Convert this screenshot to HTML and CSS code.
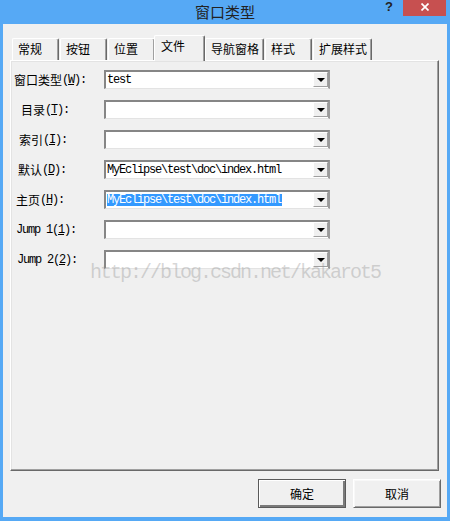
FILE: index.html
```html
<!DOCTYPE html>
<html>
<head>
<meta charset="utf-8">
<link rel="stylesheet" href="styles.css">
</head>
<body>
<div class="window">
  <div class="titlebar">
    <div class="spacer"></div>
    <div class="title">窗口类型</div>
    <div class="controls">
      <span class="help">?</span>
      <span class="close"><svg width="8" height="8" viewBox="0 0 8 8"><path d="M0.5 0.5L7.5 7.5M7.5 0.5L0.5 7.5" stroke="#fff" stroke-width="1.7"/></svg></span>
    </div>
  </div>
  <div class="client">
    <div class="tabs">
      <div class="tab">常规</div>
      <div class="tab">按钮</div>
      <div class="tab">位置</div>
      <div class="tab sel">文件</div>
      <div class="tab">导航窗格</div>
      <div class="tab">样式</div>
      <div class="tab">扩展样式</div>
    </div>
    <div class="panel">
      <div class="form">
        <div class="label i3">窗口类型<span class="a">(<u>W</u>):</span></div>
        <div class="combo"><span class="val a">test</span><span class="drop"><i class="tri"></i></span></div>

        <div class="label i10">目录<span class="a">(<u>T</u>):</span></div>
        <div class="combo"><span class="val a"></span><span class="drop"><i class="tri"></i></span></div>

        <div class="label i8">索引<span class="a">(<u>I</u>):</span></div>
        <div class="combo"><span class="val a"></span><span class="drop"><i class="tri"></i></span></div>

        <div class="label i7">默认<span class="a">(<u>D</u>):</span></div>
        <div class="combo"><span class="val a">MyEclipse\test\doc\index.html</span><span class="drop"><i class="tri"></i></span></div>

        <div class="label i5">主页<span class="a">(<u>H</u>):</span></div>
        <div class="combo"><span class="val a"><span class="hl">MyEclipse\test\doc\index.html</span></span><span class="drop"><i class="tri"></i></span></div>

        <div class="label i5"><span class="a">Jump 1(<u>1</u>):</span></div>
        <div class="combo"><span class="val a"></span><span class="drop"><i class="tri"></i></span></div>

        <div class="label i6"><span class="a">Jump 2(<u>2</u>):</span></div>
        <div class="combo"><span class="val a"></span><span class="drop"><i class="tri"></i></span></div>
      </div>
      <div class="watermark">http://blog.csdn.net/kakarot5</div>
    </div>
    <div class="buttons">
      <button class="btn def">确定</button>
      <button class="btn">取消</button>
    </div>
  </div>
</div>
</body>
</html>
```
FILE: styles.css
```css
html, body {
  margin: 0;
  padding: 0;
}
body {
  width: 450px;
  height: 521px;
  background: #56a9f5;
  font-family: "Noto Sans CJK SC", "Noto Sans", sans-serif;
  font-size: 12px;
  color: #000;
  overflow: hidden;
}
.window {
  box-sizing: border-box;
  height: 521px;
  padding: 0 3px 4px 3px;
  display: flex;
  flex-direction: column;
}
.titlebar {
  height: 24px;
  display: grid;
  grid-template-columns: 1fr auto 1fr;
  align-items: start;
}
.title {
  font-size: 15px;
  line-height: 24px;
  color: #222;
}
.controls {
  display: flex;
  justify-content: flex-end;
  align-items: flex-start;
  padding-right: 1px;
}
.help {
  font-family: "Liberation Sans", Arial, sans-serif;
  font-weight: bold;
  font-size: 13px;
  line-height: 13px;
  color: #222;
  margin-top: 0px;
  margin-right: 10px;
}
.close {
  width: 43px;
  height: 16px;
  background: #c75050;
  display: flex;
  align-items: center;
  justify-content: center;
  padding-bottom: 2px;
  box-sizing: border-box;
}
.close svg {
  display: block;
}
.client {
  flex: 1;
  background: #f0f0f0;
  padding: 11px 6px 9px 7px;
  display: flex;
  flex-direction: column;
  border-top: 0;
}
.tabs {
  height: 25px;
  display: flex;
  align-items: flex-end;
  gap: 1px;
  margin-left: 2px;
}
.tab {
  box-sizing: border-box;
  height: 22px;
  min-width: 47px;
  padding: 0 4px 0 5px;
  border-top: 1px solid #fff;
  border-left: 1px solid #fff;
  border-right: 1px solid #696969;
  box-shadow: inset -1px 0 0 #a0a0a0;
  border-radius: 2px 2px 0 0;
  line-height: 20px;
  background: #f0f0f0;
  white-space: nowrap;
}
.tab.sel {
  position: relative;
  z-index: 2;
  height: 26px;
  min-width: 51px;
  margin: 0 -1px -1px -2px;
  padding: 1px 4px 0 6px;
  line-height: 17px;
}
.panel {
  position: relative;
  flex: 1;
  margin-right: 2px;
  border-top: 1px solid #fff;
  border-left: 1px solid #fff;
  border-right: 1px solid #696969;
  border-bottom: 1px solid #696969;
  box-shadow: inset -1px -1px 0 #a0a0a0, inset 1px 1px 0 #e3e3e3;
}
.form {
  display: grid;
  grid-template-columns: 93px 226px;
  grid-auto-rows: 19px;
  row-gap: 11px;
  padding-top: 9px;
}
.label {
  display: flex;
  align-items: center;
  white-space: nowrap;
}
.i3 { padding-left: 3px; }
.i5 { padding-left: 5px; }
.i6 { padding-left: 6px; }
.i7 { padding-left: 7px; }
.i8 { padding-left: 8px; }
.i10 { padding-left: 10px; }
.a {
  font-family: "Liberation Mono", "DejaVu Sans Mono", monospace;
  font-size: 12px;
  letter-spacing: -1.2px;
}
.label u {
  text-underline-offset: 1px;
}
.combo {
  box-sizing: border-box;
  height: 19px;
  background: #fff;
  border-style: solid;
  border-width: 2px 2px 1px 2px;
  border-color: #868686 #9a9a9a #e3e3e3 #868686;
  display: flex;
  align-items: stretch;
}
.val {
  flex: 1;
  padding-left: 1px;
  display: flex;
  align-items: center;
  white-space: nowrap;
  line-height: 12px;
}
.hl {
  background: #3399ff;
  color: #fff;
  padding-right: 1px;
}
.drop {
  box-sizing: border-box;
  width: 15px;
  margin-bottom: 1px;
  background: #f0f0f0;
  border-top: 1px solid #fff;
  border-left: 1px solid #fff;
  border-right: 1px solid #a0a0a0;
  border-bottom: 1px solid #a0a0a0;
  display: flex;
  align-items: center;
  justify-content: center;
}
.tri {
  width: 0;
  height: 0;
  border-left: 4px solid transparent;
  border-right: 4px solid transparent;
  border-top: 4px solid #000;
  margin-top: 1px;
}
.watermark {
  position: absolute;
  left: 79px;
  top: 202px;
  font-family: "Liberation Mono", "Courier New", monospace;
  font-size: 20px;
  line-height: 20px;
  letter-spacing: -2px;
  color: rgba(140, 140, 140, 0.35);
  white-space: nowrap;
  pointer-events: none;
}
.buttons {
  display: flex;
  justify-content: flex-end;
  gap: 7px;
  margin-top: 8px;
}
.btn {
  box-sizing: border-box;
  width: 88px;
  height: 29px;
  margin: 0;
  padding: 0;
  font-family: "Noto Sans CJK SC", "Noto Sans", sans-serif;
  font-size: 12px;
  color: #000;
  background: #f0f0f0;
  border: 1px solid;
  border-color: #fff #696969 #696969 #fff;
  box-shadow: inset 1px 1px 0 #f8f8f8, inset -1px -1px 0 #a0a0a0;
  border-radius: 0;
}
.btn.def {
  border: 1px solid #5a5a5a;
  box-shadow: inset 1px 1px 0 #fff, inset -2px -2px 0 #7a7a7a;
}
```
